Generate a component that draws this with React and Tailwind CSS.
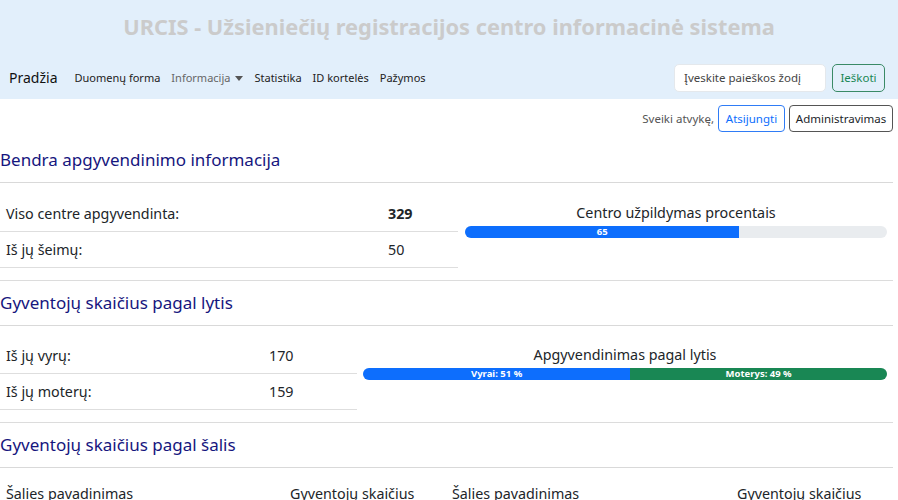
import React from 'react';

const font = { fontFamily: '"Noto Sans", "Open Sans", sans-serif' };

function Heading({ children, first }) {
  return (
    <div className={first ? 'pt-[14px]' : 'pt-[8px]'}>
      <h2 className="text-[17px] leading-[28px] text-[#16167e] pb-[8px]">{children}</h2>
      <div className="h-px bg-[#d9d9d9] mr-[5px]" />
    </div>
  );
}

function StatRow({ label, value, bold, valueX }) {
  return (
    <div className="flex items-center h-[36px] border-b border-[#dedede] text-[14.3px] text-[#212529]">
      <span className="pl-[6px]" style={{ width: valueX }}>{label}</span>
      <span className={bold ? 'font-bold' : ''}>{value}</span>
    </div>
  );
}

export default function App() {
  return (
    <div className="w-[898px] h-[500px] overflow-hidden bg-white" style={font}>
      {/* header */}
      <header className="bg-[#e2effb] h-[99px] flex flex-col">
        <h1 className="text-center text-[21.8px] font-bold text-[#cbcbcb] pt-[9px] leading-[36px]">
          URCIS - Užsieniečių registracijos centro informacinė sistema
        </h1>
        <nav className="flex items-center mt-auto pb-[7px] pl-[9px] pr-[13px]">
          <span className="text-[14px] text-[#111] mr-[17px] leading-[28px]">Pradžia</span>
          <div className="flex items-center gap-[11px] text-[11px] text-[#222]">
            <span>Duomenų forma</span>
            <span className="text-[#666] flex items-center gap-[5px]">
              Informacija
              <svg width="8" height="5" viewBox="0 0 8 5"><path d="M0 0h8L4 5z" fill="#555" /></svg>
            </span>
            <span>Statistika</span>
            <span>ID kortelės</span>
            <span>Pažymos</span>
          </div>
          <div className="ml-auto flex items-center gap-[6px]">
            <div className="w-[152px] h-[28px] bg-white rounded-[5px] border border-[#e4e8ec] flex items-center pl-[9px] text-[11.5px] text-[#444]">
              Įveskite paieškos žodį
            </div>
            <button className="h-[28px] w-[53px] rounded-[5px] border border-[#3a8a66] text-[#198754] text-[11.5px]">
              Ieškoti
            </button>
          </div>
        </nav>
      </header>

      {/* user row */}
      <div className="flex items-center justify-end gap-[4px] pt-[6px] pr-[5px] text-[11.5px]">
        <span className="text-[#555]">Sveiki atvykę,</span>
        <button className="h-[27px] w-[67px] rounded-[4px] border border-[#2f7cf6] text-[#0d6efd]">Atsijungti</button>
        <button className="h-[27px] w-[104px] rounded-[4px] border border-[#555] text-[#212529]">Administravimas</button>
      </div>

      {/* section 1 */}
      <Heading first>Bendra apgyvendinimo informacija</Heading>
      <div className="flex pt-[13px]">
        <div className="w-[458px]">
          <StatRow label="Viso centre apgyvendinta:" value="329" bold valueX={388} />
          <StatRow label="Iš jų šeimų:" value="50" valueX={388} />
        </div>
        <div className="flex-1 pl-[7px] pr-[11px] flex flex-col items-center">
          <div className="text-[14.3px] text-[#212529] leading-[22px] mt-[6px]">Centro užpildymas procentais</div>
          <div className="w-full h-[12px] bg-[#e9ecef] rounded-[6px] overflow-hidden flex mt-[2px]">
            <div className="h-full bg-[#0d6efd] text-white text-[9.5px] font-bold flex items-center justify-center leading-none" style={{ width: '65%' }}>65</div>
          </div>
        </div>
      </div>
      <div className="h-px bg-[#dcdcdc] mt-[12px] mr-[5px]" />

      {/* section 2 */}
      <Heading>Gyventojų skaičius pagal lytis</Heading>
      <div className="flex pt-[12px]">
        <div className="w-[357px]">
          <StatRow label="Iš jų vyrų:" value="170" valueX={269} />
          <StatRow label="Iš jų moterų:" value="159" valueX={269} />
        </div>
        <div className="flex-1 pl-[6px] pr-[11px] flex flex-col items-center">
          <div className="text-[14.3px] text-[#212529] leading-[22px] mt-[6px]">Apgyvendinimas pagal lytis</div>
          <div className="w-full h-[12px] bg-[#e9ecef] rounded-[6px] overflow-hidden flex mt-[2px]">
            <div className="h-full bg-[#0d6efd] text-white text-[9.5px] font-bold flex items-center justify-center leading-none" style={{ width: '51%' }}>Vyrai: 51 %</div>
            <div className="h-full bg-[#198754] text-white text-[9.5px] font-bold flex items-center justify-center leading-none" style={{ width: '49%' }}>Moterys: 49 %</div>
          </div>
        </div>
      </div>
      <div className="h-px bg-[#dcdcdc] mt-[12px] mr-[5px]" />

      {/* section 3 */}
      <Heading>Gyventojų skaičius pagal šalis</Heading>
      <div className="grid grid-cols-[290px_162px_285px_1fr] pt-[15px] text-[14.3px] text-[#212529] leading-[22px]">
        <span className="pl-[6px]">Šalies pavadinimas</span>
        <span>Gyventojų skaičius</span>
        <span>Šalies pavadinimas</span>
        <span>Gyventojų skaičius</span>
      </div>
    </div>
  );
}
